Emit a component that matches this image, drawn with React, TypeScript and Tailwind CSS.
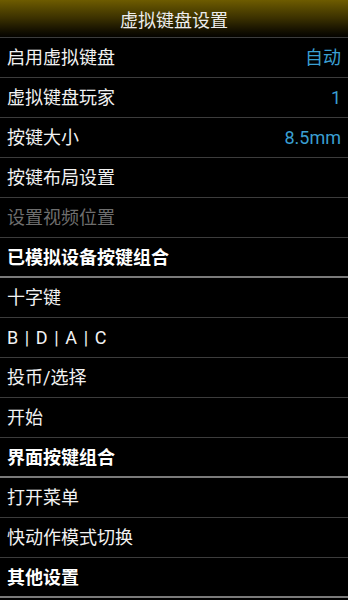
const font = { fontFamily: 'Roboto, "Noto Sans CJK SC", sans-serif' };

interface rowinterface {
  label: string;
  value?: string;
  kind?: "item" | "header" | "disabled";
}

const rows: rowinterface[] = [
  { label: "启用虚拟键盘", value: "自动" },
  { label: "虚拟键盘玩家", value: "1" },
  { label: "按键大小", value: "8.5mm" },
  { label: "按键布局设置" },
  { label: "设置视频位置", kind: "disabled" },
  { label: "已模拟设备按键组合", kind: "header" },
  { label: "十字键" },
  { label: "B | D | A | C" },
  { label: "投币/选择" },
  { label: "开始" },
  { label: "界面按键组合", kind: "header" },
  { label: "打开菜单" },
  { label: "快动作模式切换" },
  { label: "其他设置", kind: "header" },
];

const Row = ({ row }: { row: rowinterface }) => {
  if (row.kind == "header") {
    return (
      <div className="h-[40px] flex items-center px-[7px] border-b-2 border-[#7a7a7a]">
        <span className="text-[18px] font-bold text-white">{row.label}</span>
      </div>
    );
  }
  return (
    <div className="h-[40px] flex items-center justify-between px-[7px] border-b border-[#3c3c3c]">
      <span className={`text-[18px] [word-spacing:0.12em] ${row.kind == "disabled" ? "text-[#6e6e6e]" : "text-[#f2f2f2]"}`}>
        {row.label}
      </span>
      {row.value && <span className="text-[18px] text-[#3a9fd2]">{row.value}</span>}
    </div>
  );
};

export default function App() {
  return (
    <div className="w-[348px] h-[600px] bg-black overflow-hidden" style={font}>
      <div className="h-[38px] flex items-center justify-center pt-[3px] bg-gradient-to-b from-[#6e5c00] via-[#3a3000] to-[#050400] border-b border-[#3c3c3c]">
        <span className="text-[18px] text-[#ececec]">虚拟键盘设置</span>
      </div>
      {rows.map((row) => (
        <Row key={row.label} row={row} />
      ))}
    </div>
  );
}
